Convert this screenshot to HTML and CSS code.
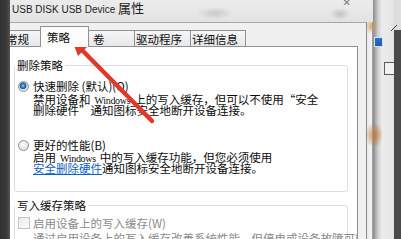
FILE: index.html
```html
<!DOCTYPE html>
<html lang="zh-CN">
<head>
<meta charset="utf-8">
<title>USB DISK USB Device 属性</title>
<link rel="stylesheet" href="styles.css">
</head>
<body>
<div class="screen">
  <div class="edge-left"></div>
  <div class="window">
    <div class="titlebar">
      <span class="title"><span class="title-lat">USB DISK USB Device</span> <span class="title-cjk">属性</span></span>
      <span class="close">✕</span>
    </div>
    <div class="frame">
      <div class="dialog">
        <div class="tabs">
          <div class="tab t1">常规</div>
          <div class="tab sel t2">策略</div>
          <div class="tab t3">卷</div>
          <div class="tab t4">驱动程序</div>
          <div class="tab t5">详细信息</div>
        </div>
        <div class="panel">
          <fieldset class="group g1">
            <legend>删除策略</legend>
            <div class="option o1"><span class="radio on"></span><span>快速删除 (默认)(Q)</span></div>
            <p class="desc d1"><span class="line">禁用设备和<span class="lat">Windows</span>上的写入缓存，但可以不使用“安全</span><span class="line">删除硬件”通知图标安全地断开设备连接。</span></p>
            <div class="option o2"><span class="radio"></span><span>更好的性能(B)</span></div>
            <p class="desc d2"><span class="line">启用<span class="lat">Windows</span>中的写入缓存功能，但您必须使用</span><span class="line"><a class="link">安全删除硬件</a>通知图标安全地断开设备连接。</span></p>
          </fieldset>
          <fieldset class="group g2">
            <legend>写入缓存策略</legend>
            <div class="option o3 disabled"><span class="check"></span><span>启用设备上的写入缓存(W)</span></div>
            <p class="desc d3 disabled"><span class="line">通过启用设备上的写入缓存改善系统性能，但停电或设备故障可能导致数据丢失或损坏。</span></p>
          </fieldset>
        </div>
      </div>
      <div class="glass"></div>
    </div>
  </div>
  <div class="backdrop"></div>
  <svg class="arrow" width="401" height="239" viewBox="0 0 401 239">
    <line x1="152" y1="121" x2="80" y2="48" stroke="#e2382c" stroke-width="4.5" stroke-linecap="round"/>
    <polygon points="72,40 88,46 78,56" fill="#e2382c"/>
  </svg>
</div>
</body>
</html>
```

FILE: styles.css
```css
* { box-sizing: border-box; margin: 0; padding: 0; }
html, body { width: 401px; height: 239px; overflow: hidden; }
body {
  background: #3b3b3b;
  font-family: "Noto Sans CJK SC", "Noto Sans", sans-serif;
  font-size: 11.5px;
  color: #0c0c0c;
}
.screen { position: relative; display: flex; width: 401px; height: 239px; overflow: hidden; }

.edge-left {
  width: 10px; flex: none;
  background: linear-gradient(to right, #303030 0, #3c3c3c 7px, #555 10px);
}

.window { width: 363px; flex: none; display: flex; flex-direction: column; }

.titlebar {
  height: 22px; flex: none;
  display: flex; align-items: flex-start;
  padding-left: 2px; padding-top: 2px;
  background:
    radial-gradient(ellipse 18px 6px at 205px 13px, rgba(170,170,170,0.5), rgba(170,170,170,0)),
    radial-gradient(ellipse 10px 6px at 330px 14px, rgba(150,150,150,0.45), rgba(150,150,150,0)),
    linear-gradient(#ececec, #e2e2e2);
}
.title { line-height: 12px; white-space: nowrap; color: #1c1c1c; }
.title-lat { font-family: "Liberation Sans", sans-serif; font-size: 10px; }
.title-cjk { font-family: "Noto Sans CJK SC", sans-serif; font-size: 13px; }
.close {
  margin-left: auto; margin-right: 22px; margin-top: -4px;
  font-family: "DejaVu Sans", sans-serif; font-size: 10px; line-height: 10px;
  color: #7a7a7a;
}

.frame { flex: 1; display: flex; min-height: 0; }

.dialog {
  width: 357px; flex: none;
  display: flex; flex-direction: column;
  background: #f0f0f0;
  border-top: 1px solid #a7a7a7;
  border-right: 1px solid #8c8c8c;
  padding-top: 3px; padding-right: 8px;
  overflow: hidden;
}

.glass {
  flex: 1;
  border-right: 1px solid #9d9d9d;
  background:
    radial-gradient(ellipse 7px 8px at 5px 4px, rgba(214,150,70,0.85), rgba(214,150,70,0)),
    radial-gradient(ellipse 9px 13px at 7px 113px, rgba(200,130,60,0.85), rgba(200,130,60,0)),
    linear-gradient(to right, #e9e9e9, #f6f6f6);
}

.tabs {
  display: flex; align-items: flex-end;
  height: 21px; flex: none;
  margin-bottom: -1px;
  position: relative; z-index: 1;
}
.tab {
  height: 16px; margin-bottom: 1px;
  border: 1px solid #8e9197; border-bottom: none; border-right: none;
  background: linear-gradient(#f6f6f6, #e8e8e8);
  line-height: 12px; padding-top: 2px;
  white-space: nowrap;
}
.t1 { width: 46px; margin-left: -16px; padding-left: 11px; }
.t2 { width: 49px; padding-left: 6px; }
.t3 { width: 45px; padding-left: 4px; border-left: none; }
.t4 { width: 56px; padding-left: 1px; }
.t5 { width: 56px; padding-left: 1px; border-right: 1px solid #8e9197; }
.tab.sel {
  height: 21px; margin-bottom: 0;
  background: #fcfcfc;
  border-right: 1px solid #8e9197;
  padding-top: 4px;
}

.panel {
  flex: 1;
  background: #fff;
  border-top: 1px solid #8e9197;
  border-right: 1px solid #8e9197;
  overflow: hidden;
}

.group {
  border: 1px solid #d5dfe5;
  border-radius: 3px;
  margin-left: 4px;
  width: 334px;
  padding: 0;
  min-width: 0;
}
.group legend { padding: 0 2px; line-height: 12px; height: 12px; margin-left: 0; color: #0c0c0c; }
.g1 { margin-top: 12px; padding-top: 9px; padding-bottom: 17px; }
.g2 { margin-top: 7px; padding-top: 6px; padding-bottom: 10px; }

.option { display: flex; align-items: center; height: 12px; line-height: 12px; padding-left: 3px; white-space: nowrap; }
.radio {
  width: 11px; height: 11px; flex: none; margin-right: 4px;
  border-radius: 50%;
  border: 1px solid #8d9093;
  background: radial-gradient(circle at 45% 40%, #ffffff 0, #ececec 45%, #cfd2d4 100%);
}
.radio.on {
  background: radial-gradient(circle at 45% 42%, #a6d4f7 0, #3d86d0 22%, #1f548f 42%, #d9dadb 52%, #f2f2f2 100%);
}
.check {
  width: 12px; height: 12px; flex: none; margin-right: 3px;
  border: 1px solid #c2c4c6;
  background: linear-gradient(135deg, #ececec, #fbfbfb);
}

.desc { padding-left: 18px; white-space: nowrap; }
.line { display: block; height: 11px; line-height: 11px; }
.d1 { margin-top: 2px; }
.o2 { margin-top: 23px; }
.d2 { margin-top: 1px; }
.d3 { margin-top: 4px; }

.lat {
  font-family: "Liberation Serif", serif;
  font-size: 10px;
  line-height: 0;
  margin: 0 4px;
  letter-spacing: -0.3px;
}
.link { color: #0b5fc9; text-decoration: underline; }
.disabled { color: #8a8a8a; }

.backdrop {
  flex: 1;
  background:
    linear-gradient(#4a4a4a, #4a4a4a) right 0 top 30px / 7px 100% no-repeat,
    linear-gradient(135deg, rgba(0,0,0,0) 45%, #3a3a3a 50%, rgba(0,0,0,0) 55%) 18px 24px / 6px 8px no-repeat,
    linear-gradient(#f1f1f1, #f1f1f1) 12px 63px / 9px 11px no-repeat,
    linear-gradient(#5c5c5c, #5c5c5c) 11px 62px / 11px 13px no-repeat,
    linear-gradient(#2d74cf, #1f5bb0) 2px 38px / 7px 8px no-repeat,
    linear-gradient(#d6e0ea, #d6e0ea) 1px 37px / 9px 10px no-repeat,
    radial-gradient(ellipse 6px 8px at -1px 26px, rgba(214,150,70,0.9), rgba(214,150,70,0)),
    radial-gradient(ellipse 9px 13px at 1px 135px, rgba(190,120,50,0.9), rgba(190,120,50,0)),
    linear-gradient(to right, #8a8a8a 0, #cfcfcf 5px, #ececec 9px, #e6e6e6 20px, #dddddd 21px);
}

.arrow { position: absolute; left: 0; top: 0; pointer-events: none; }
```
